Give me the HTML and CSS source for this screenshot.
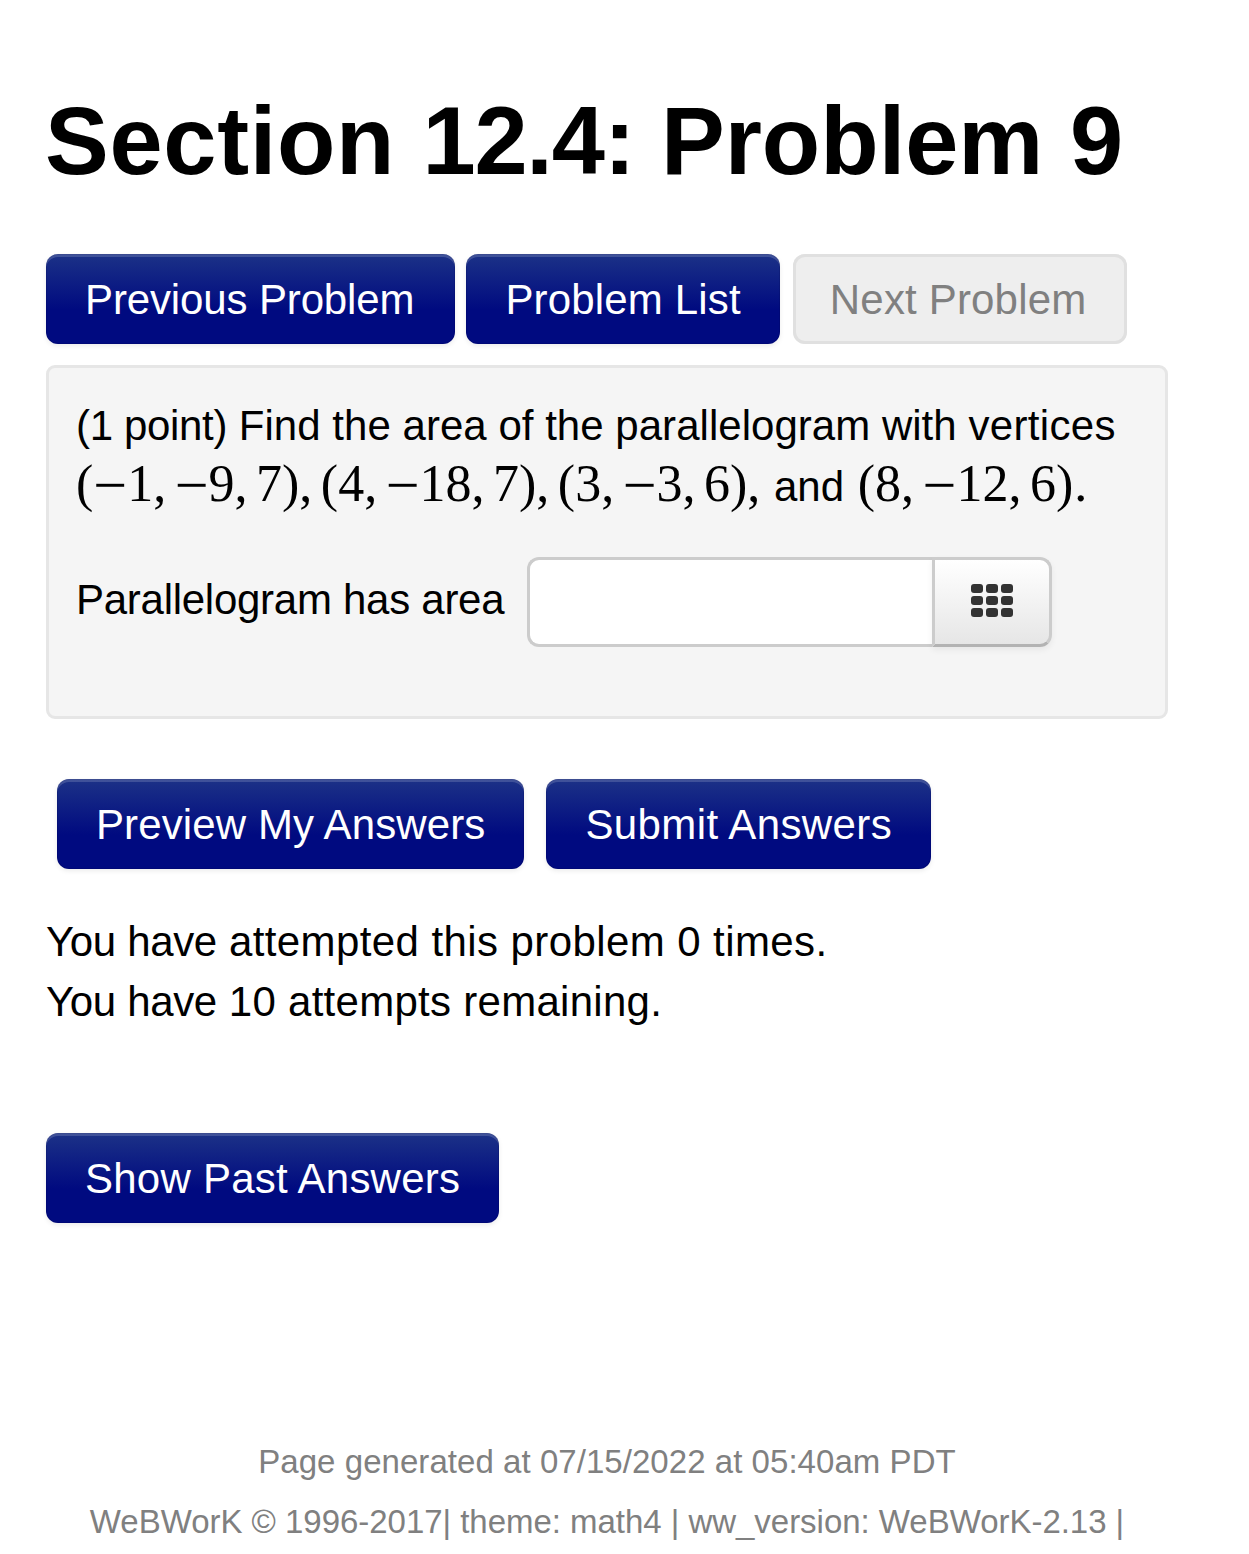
FILE: index.html
```html
<!DOCTYPE html>
<html lang="en">
<head>
<meta charset="utf-8">
<title>Section 12.4: Problem 9</title>
<link rel="stylesheet" href="styles.css">
</head>
<body>
<main class="page">
  <h1 class="title"><span class="title-section">Section </span><span class="title-num">12.4:</span> Problem 9</h1>
  <nav class="nav-row">
    <a class="btn btn-prev">Previous Problem</a>
    <a class="btn btn-list">Problem List</a>
    <a class="btn btn-disabled">Next Problem</a>
  </nav>
  <section class="well">
    <p class="question"><span class="point">(1 point)</span> Find the area of the parallelogram with <span class="vertices">vertices</span></p>
    <p class="question-math"><span class="math">(<span class="minus">−</span>1, <span class="minus">−</span>9, 7), (4, <span class="minus">−</span>18, 7), (3, <span class="minus">−</span>3, 6),</span> and <span class="math">(8, <span class="minus">−</span>12, 6<span class="close">)</span>.</span></p>
    <div class="answer-row">
      <label class="answer-label">Parallelogram has area</label>
      <div class="input-group">
        <div class="answer-input"></div>
        <button class="addon" aria-label="Equation editor">
          <svg class="grid-icon" viewBox="0 0 42 33" width="42" height="33">
            <rect x="0" y="0" width="12" height="9" rx="3"/><rect x="15" y="0" width="12" height="9" rx="3"/><rect x="30" y="0" width="12" height="9" rx="3"/>
            <rect x="0" y="12" width="12" height="9" rx="3"/><rect x="15" y="12" width="12" height="9" rx="3"/><rect x="30" y="12" width="12" height="9" rx="3"/>
            <rect x="0" y="24" width="12" height="9" rx="3"/><rect x="15" y="24" width="12" height="9" rx="3"/><rect x="30" y="24" width="12" height="9" rx="3"/>
          </svg>
        </button>
      </div>
    </div>
  </section>
  <div class="submit-row">
    <a class="btn btn-preview">Preview My Answers</a>
    <a class="btn btn-submit">Submit Answers</a>
  </div>
  <p class="attempts"><span class="line-one"><span class="you">You have</span> attempted this problem 0 times.</span><br><span class="line-two"><span class="you">You have</span> 10 attempts remaining.</span></p>
  <div class="past-row"><a class="btn btn-past">Show Past Answers</a></div>
  <footer class="footer">
    <p class="foot-one">Page generated at 07/15/2022 at 05:40am PDT</p>
    <p class="foot-two">WeBWorK © 1996-2017| theme: math4 | ww_version: WeBWorK-2.13 |</p>
  </footer>
</main>
</body>
</html>
```
FILE: styles.css
```css
* { box-sizing: border-box; }
html, body { margin: 0; padding: 0; background: #fff; }
body { font-family: "Liberation Sans", Arial, sans-serif; font-size: 42px; line-height: 60px; color: #000; }
.page { width: 1168px; padding: 0 0 0 46px; height: 1554px; overflow: hidden; }
.title { margin: 0 0 0 -1px; padding-top: 88px; font-size: 95.6px; line-height: 105px; font-weight: 700; height: 254px; }
.title-section { letter-spacing: .7px; }
.title-num { letter-spacing: -1.2px; }
.nav-row { display: flex; gap: 11px; }
.btn {
  display: block; height: 90px; padding: 1px 39px 0; line-height: 90px; color: #fff;
  border-radius: 12px; background: linear-gradient(#1c3287, #000a80 62%, #000a80);
  box-shadow: inset 0 3px 0 rgba(255,255,255,.16), inset 0 0 0 1px rgba(0,0,60,.15), 0 2px 5px rgba(0,0,0,.08);
  white-space: nowrap;
}
.btn-prev { letter-spacing: -.13px; padding-right: 41px; }
.btn-list { letter-spacing: .17px; }
.btn-preview { letter-spacing: .11px; }
.btn-submit { letter-spacing: .4px; }
.btn-past { letter-spacing: .24px; }
.btn-disabled {
  margin-left: 2px; padding: 1px 41px 0 37px; background: #eee; color: #808080; letter-spacing: .17px;
  box-shadow: inset 0 0 0 3px #e0e0e0;
}
.well {
  margin-top: 21px; height: 354px; padding: 28px 27px; background: #f5f5f5;
  border: 3px solid #e6e6e6; border-radius: 9px;
}
.question { margin: 0; letter-spacing: .03px; }
.point { letter-spacing: -.33px; }
.vertices { letter-spacing: .35px; }
.question-math { margin: -2px 0 0; height: 60px; word-spacing: 2px; }
.math { font-family: "Liberation Serif", "Times New Roman", serif; font-size: 52px; word-spacing: -4.5px; }
.minus { font-size: 60px; line-height: 1px; vertical-align: -4px; }
.close { letter-spacing: 1px; }
.answer-row { display: flex; align-items: center; gap: 23px; margin-top: 43px; }
.answer-label { letter-spacing: -.27px; padding-bottom: 4px; }
.input-group { display: flex; width: 525px; height: 90px; }
.answer-input { flex: 1; background: #fff; border: 3px solid #ccc; border-right: 0; border-radius: 12px 0 0 12px; }
.addon {
  width: 120px; padding: 0 1px 3px 0; display: flex; align-items: center; justify-content: center;
  border: 3px solid #ccc; border-bottom-color: #b3b3b3; border-radius: 0 12px 12px 0;
  background: linear-gradient(#fff, #e6e6e6); box-shadow: 0 3px 6px rgba(0,0,0,.06);
}
.grid-icon { fill: #333; display: block; }
.submit-row { display: flex; gap: 22px; margin: 60px 0 0 11px; }
.attempts { margin: 43px 0 0; }
.line-one { letter-spacing: .41px; }
.line-two { letter-spacing: .28px; }
.you { letter-spacing: -.35px; }
.past-row { margin-top: 101px; display: flex; }
.footer { margin-top: 209px; text-align: center; font-size: 33px; color: #808080; }
.footer p { margin: 0; }
.foot-one { letter-spacing: .05px; }
.foot-two { letter-spacing: -.03px; }
```
